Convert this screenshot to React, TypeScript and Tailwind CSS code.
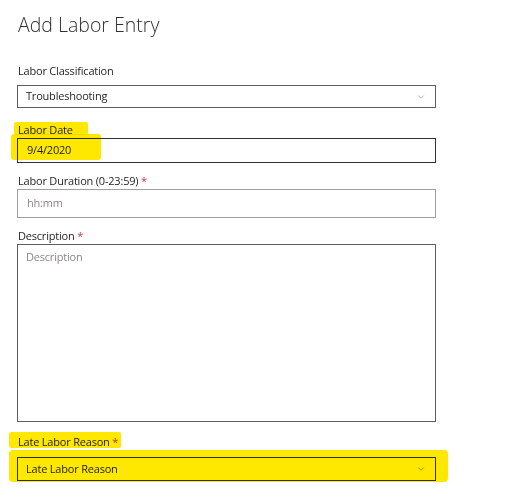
import { ChevronDown } from 'lucide-react'

const font = { fontFamily: '"Segoe UI", "Open Sans", "Liberation Sans", sans-serif' }

function Label({ text, required, className }: { text: string; required?: boolean; className?: string }) {
  return (
    <div className={`h-[16px] text-[11px] leading-[16px] tracking-[-0.2px] text-[#201f1e] ${className ?? ''}`}>
      {text}
      {required && <span className="text-[#d13438]"> *</span>}
    </div>
  )
}

export default function App() {
  return (
    <div className="relative w-[526px] h-[499px] bg-white overflow-hidden text-[#201f1e]" style={font}>
      <div className="pl-[17px] pt-[11px] w-[436px]">
        <h1 className="h-[28px] text-[19.5px] leading-[28px] font-light text-[#323130] ml-px">Add Labor Entry</h1>

        <Label text="Labor Classification" className="mt-[24px] ml-px" />
        <div className="mt-[6px] h-[23px] border border-[#605e5c] flex items-center justify-between pl-[8px] pr-[9px] text-[11px] tracking-[-0.2px]">
          <span>Troubleshooting</span>
          <ChevronDown size={10} strokeWidth={1.5} className="text-[#8a8886]" />
        </div>

        <Label text="Labor Date" className="mt-[14px] ml-px" />
        <div className="h-[25px] border border-[#323130] flex items-center pl-[9px] text-[11px] tracking-[-0.2px]">
          9/4/2020
        </div>

        <Label text="Labor Duration (0-23:59)" required className="mt-[10px] ml-px" />
        <div className="h-[29px] border border-[#a19f9d] flex items-center pl-[9px] text-[11px] tracking-[-0.2px] text-[#8a8886]">
          hh:mm
        </div>

        <Label text="Description" required className="mt-[10px] ml-px" />
        <div className="h-[178px] border border-[#605e5c] pl-[8px] pt-[4px] text-[11px] tracking-[-0.2px] text-[#8a8886]">
          Description
        </div>

        <Label text="Late Labor Reason" required className="mt-[12px] ml-px" />
        <div className="mt-[7px] h-[24px] border border-[#323130] flex items-center justify-between pl-[8px] pr-[9px] text-[11px] tracking-[-0.2px]">
          <span>Late Labor Reason</span>
          <ChevronDown size={10} strokeWidth={1.5} className="text-[#605e5c]" />
        </div>
      </div>

      {/* highlighter marks */}
      <div className="absolute left-[14px] top-[122px] w-[74px] h-[13px] bg-[#ffe800] mix-blend-multiply rounded-[2px]" />
      <div className="absolute left-[11px] top-[134px] w-[90px] h-[26px] bg-[#ffe800] mix-blend-multiply rounded-[3px]" />
      <div className="absolute left-[9px] top-[432px] w-[112px] h-[16px] bg-[#ffe800] mix-blend-multiply rounded-[2px]" />
      <div className="absolute left-[9px] top-[450px] w-[439px] h-[32px] bg-[#ffe800] mix-blend-multiply rounded-[4px]" />
    </div>
  )
}
